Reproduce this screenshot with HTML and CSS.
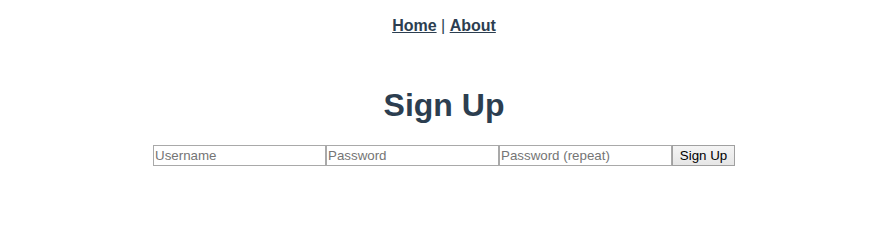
FILE: index.html
```html
<!DOCTYPE html>
<html>
<head>
<meta charset="utf-8">
<link rel="stylesheet" href="styles.css">
</head>
<body>
<div class="app">
  <nav class="nav"><a href="#" class="nav-link">Home</a> | <a href="#" class="nav-link">About</a></nav>
  <main class="main">
    <h1 class="title">Sign Up</h1>
    <form class="form">
      <input class="field" type="text" placeholder="Username"><input class="field" type="password" placeholder="Password"><input class="field" type="password" placeholder="Password (repeat)"><button class="btn" type="button">Sign Up</button>
    </form>
  </main>
</div>
</body>
</html>
```
FILE: styles.css
```css
html, body {
  margin: 0;
  padding: 0;
  background: #fff;
}
body {
  padding-left: 13px;
}
.app {
  font-family: "Liberation Sans", Arial, Helvetica, sans-serif;
  color: #2c3e50;
  text-align: center;
}
.nav {
  padding: 17px 0 15px;
  font-size: 16px;
  line-height: 18px;
}
.nav-link {
  font-weight: bold;
  color: #2c3e50;
}
.main {
  padding-top: 16px;
}
.title {
  font-size: 32px;
  line-height: 37px;
  margin: 21px 0;
  font-weight: bold;
}
.form {
  display: flex;
  justify-content: center;
}
.field {
  box-sizing: border-box;
  width: 173px;
  height: 21px;
  margin: 0;
  padding: 0 1px;
  border: 1px solid #a9a9a9;
  font-family: "Liberation Sans", Arial, sans-serif;
  font-size: 13.33px;
  color: #000;
  background: #fff;
  outline: none;
}
.field::placeholder {
  color: #757575;
}
.btn {
  box-sizing: border-box;
  width: 63px;
  height: 21px;
  margin: 0;
  padding: 0 6px;
  border: 1px solid #a0a0a0;
  background: linear-gradient(#f4f4f4, #e6e6e6);
  font-family: "Liberation Sans", Arial, sans-serif;
  font-size: 13.33px;
  color: #000;
}
```
